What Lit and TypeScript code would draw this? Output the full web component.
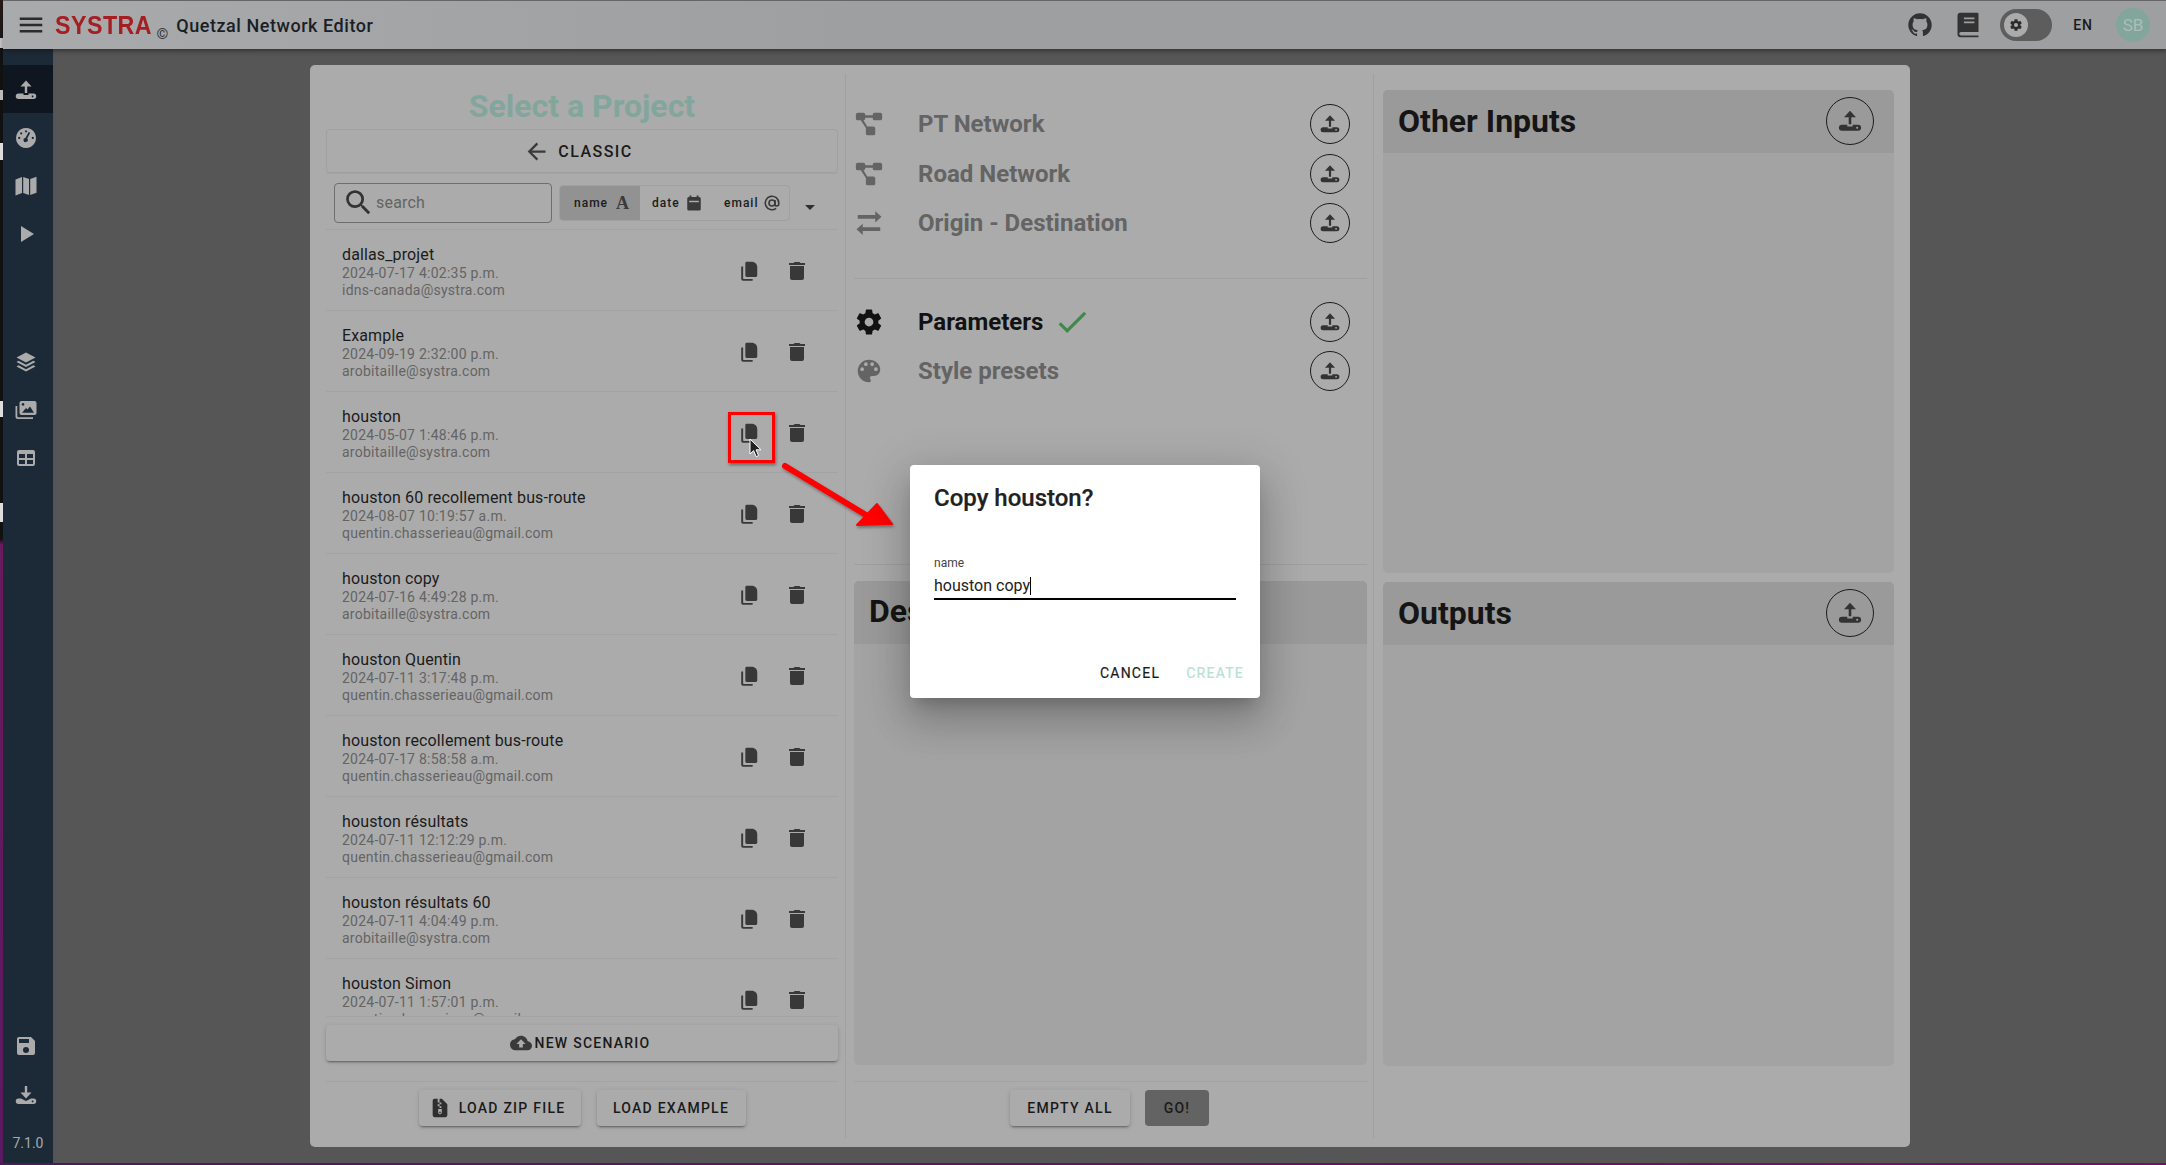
import { LitElement, html, css, svg } from "lit";
import { customElement } from "lit/decorators.js";

const P = {
  menu: "M3,6H21V8H3V6M3,11H21V13H3V11M3,16H21V18H3V16Z",
  up: "M12 2.5 L6.5 8.5 H10.8 V15 H13.2 V8.5 H17.5Z M4.5 15.5 H9.5 V17 H14.5 V15.5 H19.5 A2.6 2.6 0 0 1 19.5 21 H4.5 A2.6 2.6 0 0 1 4.5 15.5Z M18.6 17.4 a0.9 0.9 0 1 0 0.01 0Z",
  down: "M12 15.5 L6.5 9.5 H10.8 V3 H13.2 V9.5 H17.5Z M4.5 15.5 H7 L12 18 L17 15.5 H19.5 A2.6 2.6 0 0 1 19.5 21 H4.5 A2.6 2.6 0 0 1 4.5 15.5Z M18.6 17.4 a0.9 0.9 0 1 0 0.01 0Z",
  gauge: "M12 2a10 10 0 1 0 0.01 0Z M12 4.2a1.1 1.1 0 1 0 .01 0Z M7.2 6.2a1.1 1.1 0 1 0 .01 0Z M5.2 10.8a1.1 1.1 0 1 0 .01 0Z M18.8 10.8a1.1 1.1 0 1 0 .01 0Z M16.2 6.7 L13.2 12.6 A2.1 2.1 0 1 1 11.4 11.9 L14.7 6Z",
  map: "M1.5 5.5 L8 3 V19 L1.5 21.5Z M9.2 3 L15 5 V21 L9.2 19Z M16.2 5 L22.5 2.7 V18.7 L16.2 21Z",
  play: "M7,4V20L20,12Z",
  layers: "M12 2.5 L21.5 7.5 L12 12.5 L2.5 7.5Z M4.6 10.8 L12 14.7 L19.4 10.8 L21.5 12 L12 17 L2.5 12Z M4.6 15.3 L12 19.2 L19.4 15.3 L21.5 16.5 L12 21.5 L2.5 16.5Z",
  images: "M7.5 3 H20.5 A2 2 0 0 1 22.5 5 V15 A2 2 0 0 1 20.5 17 H7.5 A2 2 0 0 1 5.5 15 V5 A2 2 0 0 1 7.5 3Z M8 14.8 H20 L16 8.5 L13.5 11.5 L12 10 Z M9 5 a1.4 1.4 0 1 0 .01 0Z M1.5 8 H3.3 V18 A1.2 1.2 0 0 0 4.5 19.2 H19 V21 H4 A2.5 2.5 0 0 1 1.5 18.5Z",
  table: "M5,4H19A2,2 0 0,1 21,6V18A2,2 0 0,1 19,20H5A2,2 0 0,1 3,18V6A2,2 0 0,1 5,4M5,8V12H11V8H5M13,8V12H19V8H13M5,14V18H11V14H5M13,14V18H19V14H13Z",
  save: "M15,9H5V5H15M12,19A3,3 0 0,1 9,16A3,3 0 0,1 12,13A3,3 0 0,1 15,16A3,3 0 0,1 12,19M17,3H5C3.89,3 3,3.9 3,5V19A2,2 0 0,0 5,21H19A2,2 0 0,0 21,19V7L17,3Z",
  github: "M12,2A10,10 0 0,0 2,12C2,16.42 4.87,20.17 8.84,21.5C9.34,21.58 9.5,21.27 9.5,21C9.5,20.77 9.5,20.14 9.5,19.31C6.73,19.91 6.14,17.97 6.14,17.97C5.68,16.81 5.03,16.5 5.03,16.5C4.12,15.88 5.1,15.9 5.1,15.9C6.1,15.97 6.63,16.93 6.63,16.93C7.5,18.45 8.97,18 9.54,17.76C9.63,17.11 9.89,16.67 10.17,16.42C7.95,16.17 5.62,15.31 5.62,11.5C5.62,10.39 6,9.5 6.65,8.79C6.55,8.54 6.2,7.5 6.75,6.15C6.75,6.15 7.59,5.88 9.5,7.17C10.29,6.95 11.15,6.84 12,6.84C12.85,6.84 13.71,6.95 14.5,7.17C16.41,5.88 17.25,6.15 17.25,6.15C17.8,7.5 17.45,8.54 17.35,8.79C18,9.5 18.38,10.39 18.38,11.5C18.38,15.32 16.04,16.16 13.81,16.41C14.17,16.72 14.5,17.33 14.5,18.26C14.5,19.6 14.5,20.68 14.5,21C14.5,21.27 14.66,21.59 15.17,21.5C19.14,20.16 22,16.42 22,12A10,10 0 0,0 12,2Z",
  book: "M5.5 1.5 H20 A1 1 0 0 1 21 2.5 V18 H6 A1.5 1.5 0 0 0 6 21 H21 V22.5 H5.5 A2.5 2.5 0 0 1 3 20 V4 A2.5 2.5 0 0 1 5.5 1.5Z M8.5 5.5 V7 H17.5 V5.5Z M8.5 9 V10.5 H17.5 V9Z",
  cog: "M12,15.5A3.5,3.5 0 0,1 8.5,12A3.5,3.5 0 0,1 12,8.5A3.5,3.5 0 0,1 15.5,12A3.5,3.5 0 0,1 12,15.5M19.43,12.97C19.47,12.65 19.5,12.33 19.5,12C19.5,11.67 19.47,11.34 19.43,11L21.54,9.37C21.73,9.22 21.78,8.95 21.66,8.73L19.66,5.27C19.54,5.05 19.27,4.96 19.05,5.05L16.56,6.05C16.04,5.66 15.5,5.32 14.87,5.07L14.5,2.42C14.46,2.18 14.25,2 14,2H10C9.75,2 9.54,2.18 9.5,2.42L9.13,5.07C8.5,5.32 7.96,5.66 7.44,6.05L4.95,5.05C4.73,4.96 4.46,5.05 4.34,5.27L2.34,8.73C2.21,8.95 2.27,9.22 2.46,9.37L4.57,11C4.53,11.34 4.5,11.67 4.5,12C4.5,12.33 4.53,12.65 4.57,12.97L2.46,14.63C2.27,14.78 2.21,15.05 2.34,15.27L4.34,18.73C4.46,18.95 4.73,19.03 4.95,18.95L7.44,17.94C7.96,18.34 8.5,18.68 9.13,18.93L9.5,21.58C9.54,21.82 9.75,22 10,22H14C14.25,22 14.46,21.82 14.5,21.58L14.87,18.93C15.5,18.67 16.04,18.34 16.56,17.94L19.05,18.95C19.27,19.03 19.54,18.95 19.66,18.73L21.66,15.27C21.78,15.05 21.73,14.78 21.54,14.63L19.43,12.97Z",
  arrow: "M20,11V13H8L13.5,18.5L12.08,19.92L4.16,12L12.08,4.08L13.5,5.5L8,11H20Z",
  search: "M9.5,3A6.5,6.5 0 0,1 16,9.5C16,11.11 15.41,12.59 14.44,13.73L14.71,14H15.5L20.5,19L19,20.5L14,15.5V14.71L13.73,14.44C12.59,15.41 11.11,16 9.5,16A6.5,6.5 0 0,1 3,9.5A6.5,6.5 0 0,1 9.5,3M9.5,5C7,5 5,7 5,9.5C5,12 7,14 9.5,14C12,14 14,12 14,9.5C14,7 12,5 9.5,5Z",
  calendar: "M6 2 H8.5 V4 H15.5 V2 H18 V4 H19 A2 2 0 0 1 21 6 V20 A2 2 0 0 1 19 22 H5 A2 2 0 0 1 3 20 V6 A2 2 0 0 1 5 4 H6Z M5.5 9 V11 H18.5 V9Z",
  caret: "M7,10L12,15L17,10H7Z",
  copy: "M9.5 2 H15 C18.5 2 21 4.5 21 8 V17 A1.5 1.5 0 0 1 19.5 18.5 H9.5 A1.5 1.5 0 0 1 8 17 V3.5 A1.5 1.5 0 0 1 9.5 2Z M3.5 7 H5.6 V20 A.6 .6 0 0 0 6.2 20.6 H16 V22.6 H5.5 A2 2 0 0 1 3.5 20.6Z",
  trash: "M20,4H15.5L14.5,3H9.5L8.5,4H4V6H20M5,19A2,2 0 0,0 7,21H17A2,2 0 0,0 19,19V7H5V19Z",
  net: "M1.5 4.5 A1.5 1.5 0 0 1 3 3 H7.5 A1.5 1.5 0 0 1 9 4.5 V5 H15 V4.5 A1.5 1.5 0 0 1 16.5 3 H21 A1.5 1.5 0 0 1 22.5 4.5 V7.5 A1.5 1.5 0 0 1 21 9 H16.5 A1.5 1.5 0 0 1 15 7.5 V7 H9 V7.5 A1.5 1.5 0 0 1 7.6 9 L10.6 14 H15.5 A1.5 1.5 0 0 1 17 15.5 V19.5 A1.5 1.5 0 0 1 15.5 21 H11 A1.5 1.5 0 0 1 9.5 19.5 V15.2 L5.4 9 H3 A1.5 1.5 0 0 1 1.5 7.5Z",
  swap: "M17 2.5 L22 7 L17 11.5 V8.6 H3 V5.6 H17Z M7 12.5 V15.4 H21 V18.4 H7 V21.5 L2 17Z",
  palette: "M17.5,12A1.5,1.5 0 0,1 16,10.5A1.5,1.5 0 0,1 17.5,9A1.5,1.5 0 0,1 19,10.5A1.5,1.5 0 0,1 17.5,12M14.5,8A1.5,1.5 0 0,1 13,6.5A1.5,1.5 0 0,1 14.5,5A1.5,1.5 0 0,1 16,6.5A1.5,1.5 0 0,1 14.5,8M9.5,8A1.5,1.5 0 0,1 8,6.5A1.5,1.5 0 0,1 9.5,5A1.5,1.5 0 0,1 11,6.5A1.5,1.5 0 0,1 9.5,8M6.5,12A1.5,1.5 0 0,1 5,10.5A1.5,1.5 0 0,1 6.5,9A1.5,1.5 0 0,1 8,10.5A1.5,1.5 0 0,1 6.5,12M12,3A9,9 0 0,0 3,12A9,9 0 0,0 12,21A1.5,1.5 0 0,0 13.5,19.5C13.5,19.11 13.35,18.76 13.11,18.5C12.88,18.23 12.73,17.88 12.73,17.5A1.5,1.5 0 0,1 14.23,16H16A5,5 0 0,0 21,11C21,6.58 16.97,3 12,3Z",
  check: "M21,7L9,19L3.5,13.5L4.91,12.09L9,16.17L19.59,5.59L21,7Z",
  cloud: "M14,13V17H10V13H7L12,8L17,13M19.35,10.03C18.67,6.59 15.64,4 12,4C9.11,4 6.6,5.64 5.35,8.03C2.34,8.36 0,10.9 0,14A6,6 0 0,0 6,20H19A5,5 0 0,0 24,15C24,12.36 21.95,10.22 19.35,10.03Z",
  zip: "M6 2 H9.5 V4 H11.5 V2 H14 L20 8 V20 A2 2 0 0 1 18 22 H6 A2 2 0 0 1 4 20 V4 A2 2 0 0 1 6 2Z M9.5 4 V6 H11.5 V4Z M11.5 6 V8 H13.5 V6Z M9.5 8 V10 H11.5 V8Z M11.5 10 V12 H13.5 V10Z M10 13 V17 A2 2 0 0 0 14 17 V13Z M11.2 16 H12.8 V17.6 H11.2Z",
};

const ic = (d: string, cls = "") =>
  html`<svg class="ic ${cls}" viewBox="0 0 24 24">${svg`<path fill-rule="evenodd" d=${d}></path>`}</svg>`;

const Q = "quentin.chasserieau@gmail.com";
const A = "arobitaille@systra.com";
const rows = [
  ["dallas_projet", "2024-07-17 4:02:35 p.m.", "idns-canada@systra.com"],
  ["Example", "2024-09-19 2:32:00 p.m.", A],
  ["houston", "2024-05-07 1:48:46 p.m.", A],
  ["houston 60 recollement bus-route", "2024-08-07 10:19:57 a.m.", Q],
  ["houston copy", "2024-07-16 4:49:28 p.m.", A],
  ["houston Quentin", "2024-07-11 3:17:48 p.m.", Q],
  ["houston recollement bus-route", "2024-07-17 8:58:58 a.m.", Q],
  ["houston résultats", "2024-07-11 12:12:29 p.m.", Q],
  ["houston résultats 60", "2024-07-11 4:04:49 p.m.", A],
  ["houston Simon", "2024-07-11 1:57:01 p.m.", Q],
];

@customElement("app-root")
export class AppRoot extends LitElement {
  static styles = css`
    :host { display: flex; position: relative; width: 2166px; height: 1165px; overflow: hidden;
      font-family: Roboto, "Liberation Sans", sans-serif; background: #565656; color: #161616; }
    * { box-sizing: border-box; }
    .ic { display: block; width: 24px; height: 24px; fill: currentColor; flex: none; }

    .strip { flex: none; width: 3px; background: linear-gradient(180deg, #2a1a18 0, #1a1a1a 38px, #c8c8c8 38px, #c8c8c8 48px, #111 48px, #111 90px, #bbb 90px, #bbb 100px, #111 100px, #111 143px, #ddd 143px, #ddd 160px, #111 160px, #111 401px, #ddd 401px, #ddd 417px, #111 417px, #111 503px, #ddd 503px, #ddd 522px, #111 522px, #111 539px, #6a1a5e 545px, #5a1a60 100%); }
    .wrap { flex: 1; min-width: 0; display: flex; flex-direction: column; }

    .top { flex: none; height: 49px; display: flex; align-items: center; border-top: 1px solid #666;
      background: linear-gradient(90deg, #a9aaab, #9e9fa1 40%, #9e9fa1); box-shadow: 0 2px 4px rgba(0,0,0,.35); position: relative; z-index: 2; padding-left: 13px; }
    .burger { width: 30px; height: 30px; color: #2b2b2b; margin-right: 9px; }
    .logo { font: 700 25px/1 "Liberation Sans", sans-serif; color: #a51e22; letter-spacing: .5px; transform: scaleX(.93); transform-origin: left center; margin-right: -7px; }
    .copy-mark { font: 400 15px/1 Roboto, sans-serif; color: #333; margin: 19px 8px 0 4px; }
    .app-title { font-size: 18px; font-weight: 500; color: #1a1f26; letter-spacing: .55px; }
    .top-right { margin-left: auto; display: flex; align-items: center; color: #333; padding-right: 16px; }
    .top-right .gh { width: 28px; height: 28px; margin-right: 20px; }
    .top-right .bk { width: 28px; height: 28px; margin-right: 18px; }
    .toggle { width: 52px; height: 32px; border-radius: 16px; background: #5d5d5d; padding: 4px; margin-right: 21px; }
    .thumb { width: 24px; height: 24px; border-radius: 50%; background: #ababab; display: flex; align-items: center; justify-content: center; color: #2c2c2c; }
    .thumb .ic { width: 14px; height: 14px; }
    .lang { font-size: 14px; font-weight: 500; letter-spacing: 1px; margin-right: 23px; color: #1a1a1a; }
    .avatar { width: 34px; height: 34px; border-radius: 50%; background: #82a69c; color: #adbdb8; font-size: 17px; display: flex; align-items: center; justify-content: center; }

    .body { flex: 1; display: flex; min-height: 0; }
    .side { flex: none; width: 50px; background: #1c2a37; color: #ababab; display: flex; flex-direction: column; align-items: stretch; padding: 16px 0 5px; }
    .nav { height: 48px; flex: none; display: flex; align-items: center; justify-content: center; padding: 2px 4px 0 0; }
    .nav.on { background: #10161f; }
    .gap { height: 80px; flex: none; }
    .grow { flex: 1; }
    .save { margin-bottom: 1px; }
    .ver { height: 34px; margin-top: 8px; flex: none; font-size: 14px; display: flex; align-items: center; justify-content: center; color: #a9a9a9; }

    .main { flex: 1; min-width: 0; padding: 16px 256px 16px 257px; box-shadow: inset 0 4px 6px -3px rgba(0,0,0,.1); }
    .card { height: 1082px; background: #ababab; border-radius: 5px; display: flex; padding: 9px 0; }
    .col { display: flex; flex-direction: column; }
    .c1 { width: 536px; padding: 0 7px 0 16px; border-right: 1px solid #a0a0a0; }
    .c2 { width: 528px; padding: 0 6px 0 8px; border-right: 1px solid #a0a0a0; }
    .c3 { flex: 1; padding: 16px 16px 0 9px; display: flex; flex-direction: column; gap: 9px; }

    .title { height: 55px; flex: none; display: flex; align-items: flex-end; justify-content: center; font-size: 32px; font-weight: 700; color: #82a69c; line-height: 42px; padding-bottom: 2px; }
    .btn { font-size: 14px; font-weight: 500; letter-spacing: 1.25px; text-transform: uppercase; display: flex; align-items: center; justify-content: center; color: #1a1a1a; border-radius: 4px; white-space: nowrap; }
    .classic { height: 44px; flex: none; border: 1px solid #a0a0a0; gap: 8px; font-size: 16px; letter-spacing: 1.45px; padding-right: 8px; }
    .classic .ic { color: #3a3a3a; width: 27px; height: 27px; }
    .tools { height: 57px; flex: none; display: flex; align-items: center; padding: 2px 0 0 8px; border-top: 1px solid #a3a3a3; border-bottom: 1px solid #a3a3a3; }
    .search { width: 218px; height: 40px; border: 1px solid #6e6e6e; border-radius: 4px; display: flex; align-items: center; padding-left: 7px; gap: 1px; font-size: 16px; color: #636363; letter-spacing: .2px; }
    .search .ic { width: 33px; height: 33px; color: #333; }
    .sort { margin-left: 7px; width: 231px; height: 36px; border: 1px solid #a0a0a0; border-radius: 4px; display: flex; overflow: hidden; font-size: 12px; font-weight: 500; letter-spacing: 1px; color: #1c1c1c; }
    .opt { display: flex; align-items: center; gap: 8px; padding: 0 12px; }
    .opt.on { background: #929292; width: 80px; padding-left: 14px; }
    .opt .ic { width: 18px; height: 18px; color: #3a3a3a; }
    .opt.date { width: 72px; gap: 5px; }
    .opt.mail { width: 76px; justify-content: flex-start; padding: 0 0 0 12px; gap: 5px; }
    .glyph { font: 700 18px/1 "Liberation Serif", serif; color: #3a3a3a; letter-spacing: 0; }
    .caret { width: 24px; height: 24px; margin-left: 8px; margin-top: 8px; color: #2f2f2f; }

    .list { height: 787px; flex: none; overflow: hidden; border-bottom: 1px solid #a3a3a3; }
    .row { height: 81px; display: flex; align-items: center; padding-left: 16px; padding-right: 17px; border-bottom: 1px solid #a3a3a3; }
    .info { flex: 1; display: flex; flex-direction: column; min-width: 0; padding-top: 2px; }
    .n { font-size: 16px; line-height: 21px; color: #1b1b1b; letter-spacing: .13px; }
    .d { font-size: 14px; line-height: 16.5px; color: #646464; letter-spacing: .25px; }
    .act { width: 48px; height: 48px; display: flex; align-items: center; justify-content: center; color: #383838; padding-top: 1px; }
    .act .cp { width: 22px; height: 22px; }

    .raised { background: #ababab; box-shadow: 0 3px 1px -2px rgba(0,0,0,.2), 0 2px 2px 0 rgba(0,0,0,.14), 0 1px 5px 0 rgba(0,0,0,.12); height: 36px; flex: none; }
    .newsc { margin-top: 8px; gap: 3px; padding-right: 4px; }
    .newsc .ic { color: #3a3a3a; width: 22px; height: 22px; }
    .foot { height: 56px; flex: none; margin-top: 20px; border-top: 1px solid #a3a3a3; display: flex; justify-content: center; gap: 16px; padding-top: 8px; }
    .zipb { width: 162px; gap: 8px; padding-right: 5px; }
    .zipb .ic { width: 22px; height: 22px; color: #2f2f2f; }
    .exb { width: 149px; }
    .go { width: 64px; height: 36px; background: #636363; }
    .foot.m { gap: 15px; padding-right: 2px; margin-top: 16px; }
    .empty { width: 120px; }

    .item { height: 40px; flex: none; display: flex; align-items: center; font-size: 24px; font-weight: 700; color: #646464; margin-bottom: 9.5px; }
    .item:first-child { margin-top: 30px; }
    .item.on { color: #121212; }
    .item .lead { width: 30px; height: 30px; margin-right: 34px; color: #646464; }
    .item.on .lead { color: #121212; }
    .chk { width: 38px; height: 38px; color: #3f8a4a; margin-left: 10px; }
    .circ { margin-left: auto; margin-right: 17px; width: 40px; height: 40px; border-radius: 50%; border: 1px solid #1c1c1c; color: #333; display: flex; align-items: center; justify-content: center; }
    .circ .ic { width: 22px; height: 22px; }
    .hr { height: 1px; background: #a0a0a0; flex: none; }
    .h1 { margin: 25px 0 23px; }
    .h2 { margin: 163px 0 16px; }

    .panel { background: #a3a3a3; border-radius: 5px; flex: none; overflow: hidden; }
    .phead { height: 63px; background: #9a9a9a; display: flex; align-items: center; padding: 0 20px 2px 15px; font-size: 32px; font-weight: 700; color: #151515; }
    .phead .circ { width: 48px; height: 48px; margin-right: 0; }
    .phead .circ .ic { width: 26px; height: 26px; }
    .p-d { height: 484px; }
    .p-t { height: 483px; }

    .dlg { position: absolute; left: 910px; top: 465px; width: 350px; height: 233px; background: #fff; border-radius: 4px; box-shadow: 0 11px 15px -7px rgba(0,0,0,.2), 0 24px 38px 3px rgba(0,0,0,.14), 0 9px 46px 8px rgba(0,0,0,.12); display: flex; flex-direction: column; padding: 0 24px; color: #212121; }
    .dlg h2 { margin: 16px 0 0; font-size: 24px; font-weight: 500; line-height: 34px; height: 75px; -webkit-text-stroke: .2px #212121; }
    .lbl { font-size: 12px; line-height: 14px; color: #444; margin-bottom: 4px; }
    .val { font-size: 16px; line-height: 24px; height: 26px; border-bottom: 2px solid #000; color: #222; display: flex; align-items: center; }
    .cursor { width: 1px; height: 18px; background: #000; }
    .dact { margin-top: auto; display: flex; justify-content: flex-end; gap: 26px; margin-right: -8px; height: 37.5px; }
    .dact .btn { height: 24px; font-weight: 400; -webkit-text-stroke: .2px currentColor; }
    .dact .off { color: #b5e2d5; }

    .hl { position: absolute; left: 728px; top: 412px; width: 47px; height: 51px; border: 3px solid #f00; box-shadow: 1px 2px 3px rgba(0,0,0,.4); }
    .annot { position: absolute; left: 770px; top: 455px; width: 140px; height: 90px; overflow: visible; }
    .mouse { position: absolute; left: 749px; top: 438px; width: 13px; height: 20px; }
    .bottomline { position: absolute; left: 0; right: 0; top: 1163px; height: 2px; background: linear-gradient(90deg, #4d1a5c, #7a0a6e); }
  `;

  private item(icon: string, label: string, on = false, check = false) {
    return html`<div class="item ${on ? "on" : ""}">
      ${ic(icon, "lead")}<span>${label}</span>${check ? ic(P.check, "chk") : ""}
      <div class="circ">${ic(P.up)}</div>
    </div>`;
  }

  private panel(title: string, cls: string, btn = true) {
    return html`<div class="panel ${cls}">
      <div class="phead"><span>${title}</span>${btn ? html`<div class="circ">${ic(P.up)}</div>` : ""}</div>
    </div>`;
  }

  render() {
    return html`
      <div class="strip"></div>
      <div class="wrap">
        <div class="top">
          ${ic(P.menu, "burger")}
          <span class="logo">SYSTRA</span>
          <span class="copy-mark">©</span>
          <span class="app-title">Quetzal Network Editor</span>
          <div class="top-right">
            ${ic(P.github, "gh")}
            ${ic(P.book, "bk")}
            <div class="toggle"><div class="thumb">${ic(P.cog)}</div></div>
            <span class="lang">EN</span>
            <div class="avatar">SB</div>
          </div>
        </div>
        <div class="body">
          <div class="side">
            <div class="nav on">${ic(P.up)}</div>
            <div class="nav">${ic(P.gauge)}</div>
            <div class="nav">${ic(P.map)}</div>
            <div class="nav">${ic(P.play)}</div>
            <div class="gap"></div>
            <div class="nav">${ic(P.layers)}</div>
            <div class="nav">${ic(P.images)}</div>
            <div class="nav">${ic(P.table)}</div>
            <div class="grow"></div>
            <div class="nav save">${ic(P.save)}</div>
            <div class="nav">${ic(P.down)}</div>
            <div class="ver">7.1.0</div>
          </div>
          <div class="main">
            <div class="card">
              <div class="col c1">
                <div class="title">Select a Project</div>
                <div class="btn classic">${ic(P.arrow)}<span>Classic</span></div>
                <div class="tools">
                  <div class="search">${ic(P.search)}<span>search</span></div>
                  <div class="sort">
                    <div class="opt on"><span>name</span><span class="glyph">A</span></div>
                    <div class="opt date"><span>date</span>${ic(P.calendar)}</div>
                    <div class="opt mail"><span>email</span><svg class="ic at" viewBox="0 0 24 24" style="fill:none;stroke:currentColor;stroke-width:2.2"><circle cx="12" cy="12" r="4"></circle><path d="M16 8v5.5a2.5 2.5 0 0 0 5 0V12a9 9 0 1 0-3.5 7.1"></path></svg></div>
                  </div>
                  ${ic(P.caret, "caret")}
                </div>
                <div class="list">
                  ${rows.map(
                    (r) => html`<div class="row">
                      <div class="info">
                        <div class="n">${r[0]}</div>
                        <div class="d">${r[1]}</div>
                        <div class="d">${r[2]}</div>
                      </div>
                      <div class="act">${ic(P.copy, "cp")}</div>
                      <div class="act">${ic(P.trash)}</div>
                    </div>`
                  )}
                </div>
                <div class="btn raised newsc">${ic(P.cloud)}<span>New Scenario</span></div>
                <div class="foot">
                  <div class="btn raised zipb">${ic(P.zip)}<span>Load Zip File</span></div>
                  <div class="btn raised exb">Load Example</div>
                </div>
              </div>
              <div class="col c2">
                ${this.item(P.net, "PT Network")}
                ${this.item(P.net, "Road Network")}
                ${this.item(P.swap, "Origin - Destination")}
                <div class="hr h1"></div>
                ${this.item(P.cog, "Parameters", true, true)}
                ${this.item(P.palette, "Style presets")}
                <div class="hr h2"></div>
                ${this.panel("Description", "p-d", false)}
                <div class="foot m">
                  <div class="btn raised empty">Empty All</div>
                  <div class="btn go">Go!</div>
                </div>
              </div>
              <div class="c3">
                ${this.panel("Other Inputs", "p-t")}
                ${this.panel("Outputs", "p-d")}
              </div>
            </div>
          </div>
        </div>
      </div>
      <div class="bottomline"></div>

      <div class="hl"></div>
      <svg class="annot" viewBox="0 0 140 90">
        <defs><filter id="s" x="-20%" y="-20%" width="140%" height="140%"><feDropShadow dx="1" dy="2" stdDeviation="1.5" flood-opacity=".35"></feDropShadow></filter></defs>
        <g filter="url(#s)" fill="#f00" stroke="#f00" stroke-linejoin="round">
          <path d="M15 11 L96 60" stroke-width="6" stroke-linecap="round"></path>
          <path d="M107 49 L87 70 L122 69Z" stroke-width="2"></path>
        </g>
      </svg>
      <svg class="mouse" viewBox="0 0 13 20"><path d="M1 1 V16 L4.6 12.6 L7.2 18.6 L9.6 17.6 L7 11.8 H12Z" fill="#222" stroke="#fff" stroke-width="1"></path></svg>

      <div class="dlg">
        <h2>Copy houston?</h2>
        <div class="lbl">name</div>
        <div class="val"><span>houston copy</span><span class="cursor"></span></div>
        <div class="dact">
          <div class="btn">Cancel</div>
          <div class="btn off">Create</div>
        </div>
      </div>
    `;
  }
}
